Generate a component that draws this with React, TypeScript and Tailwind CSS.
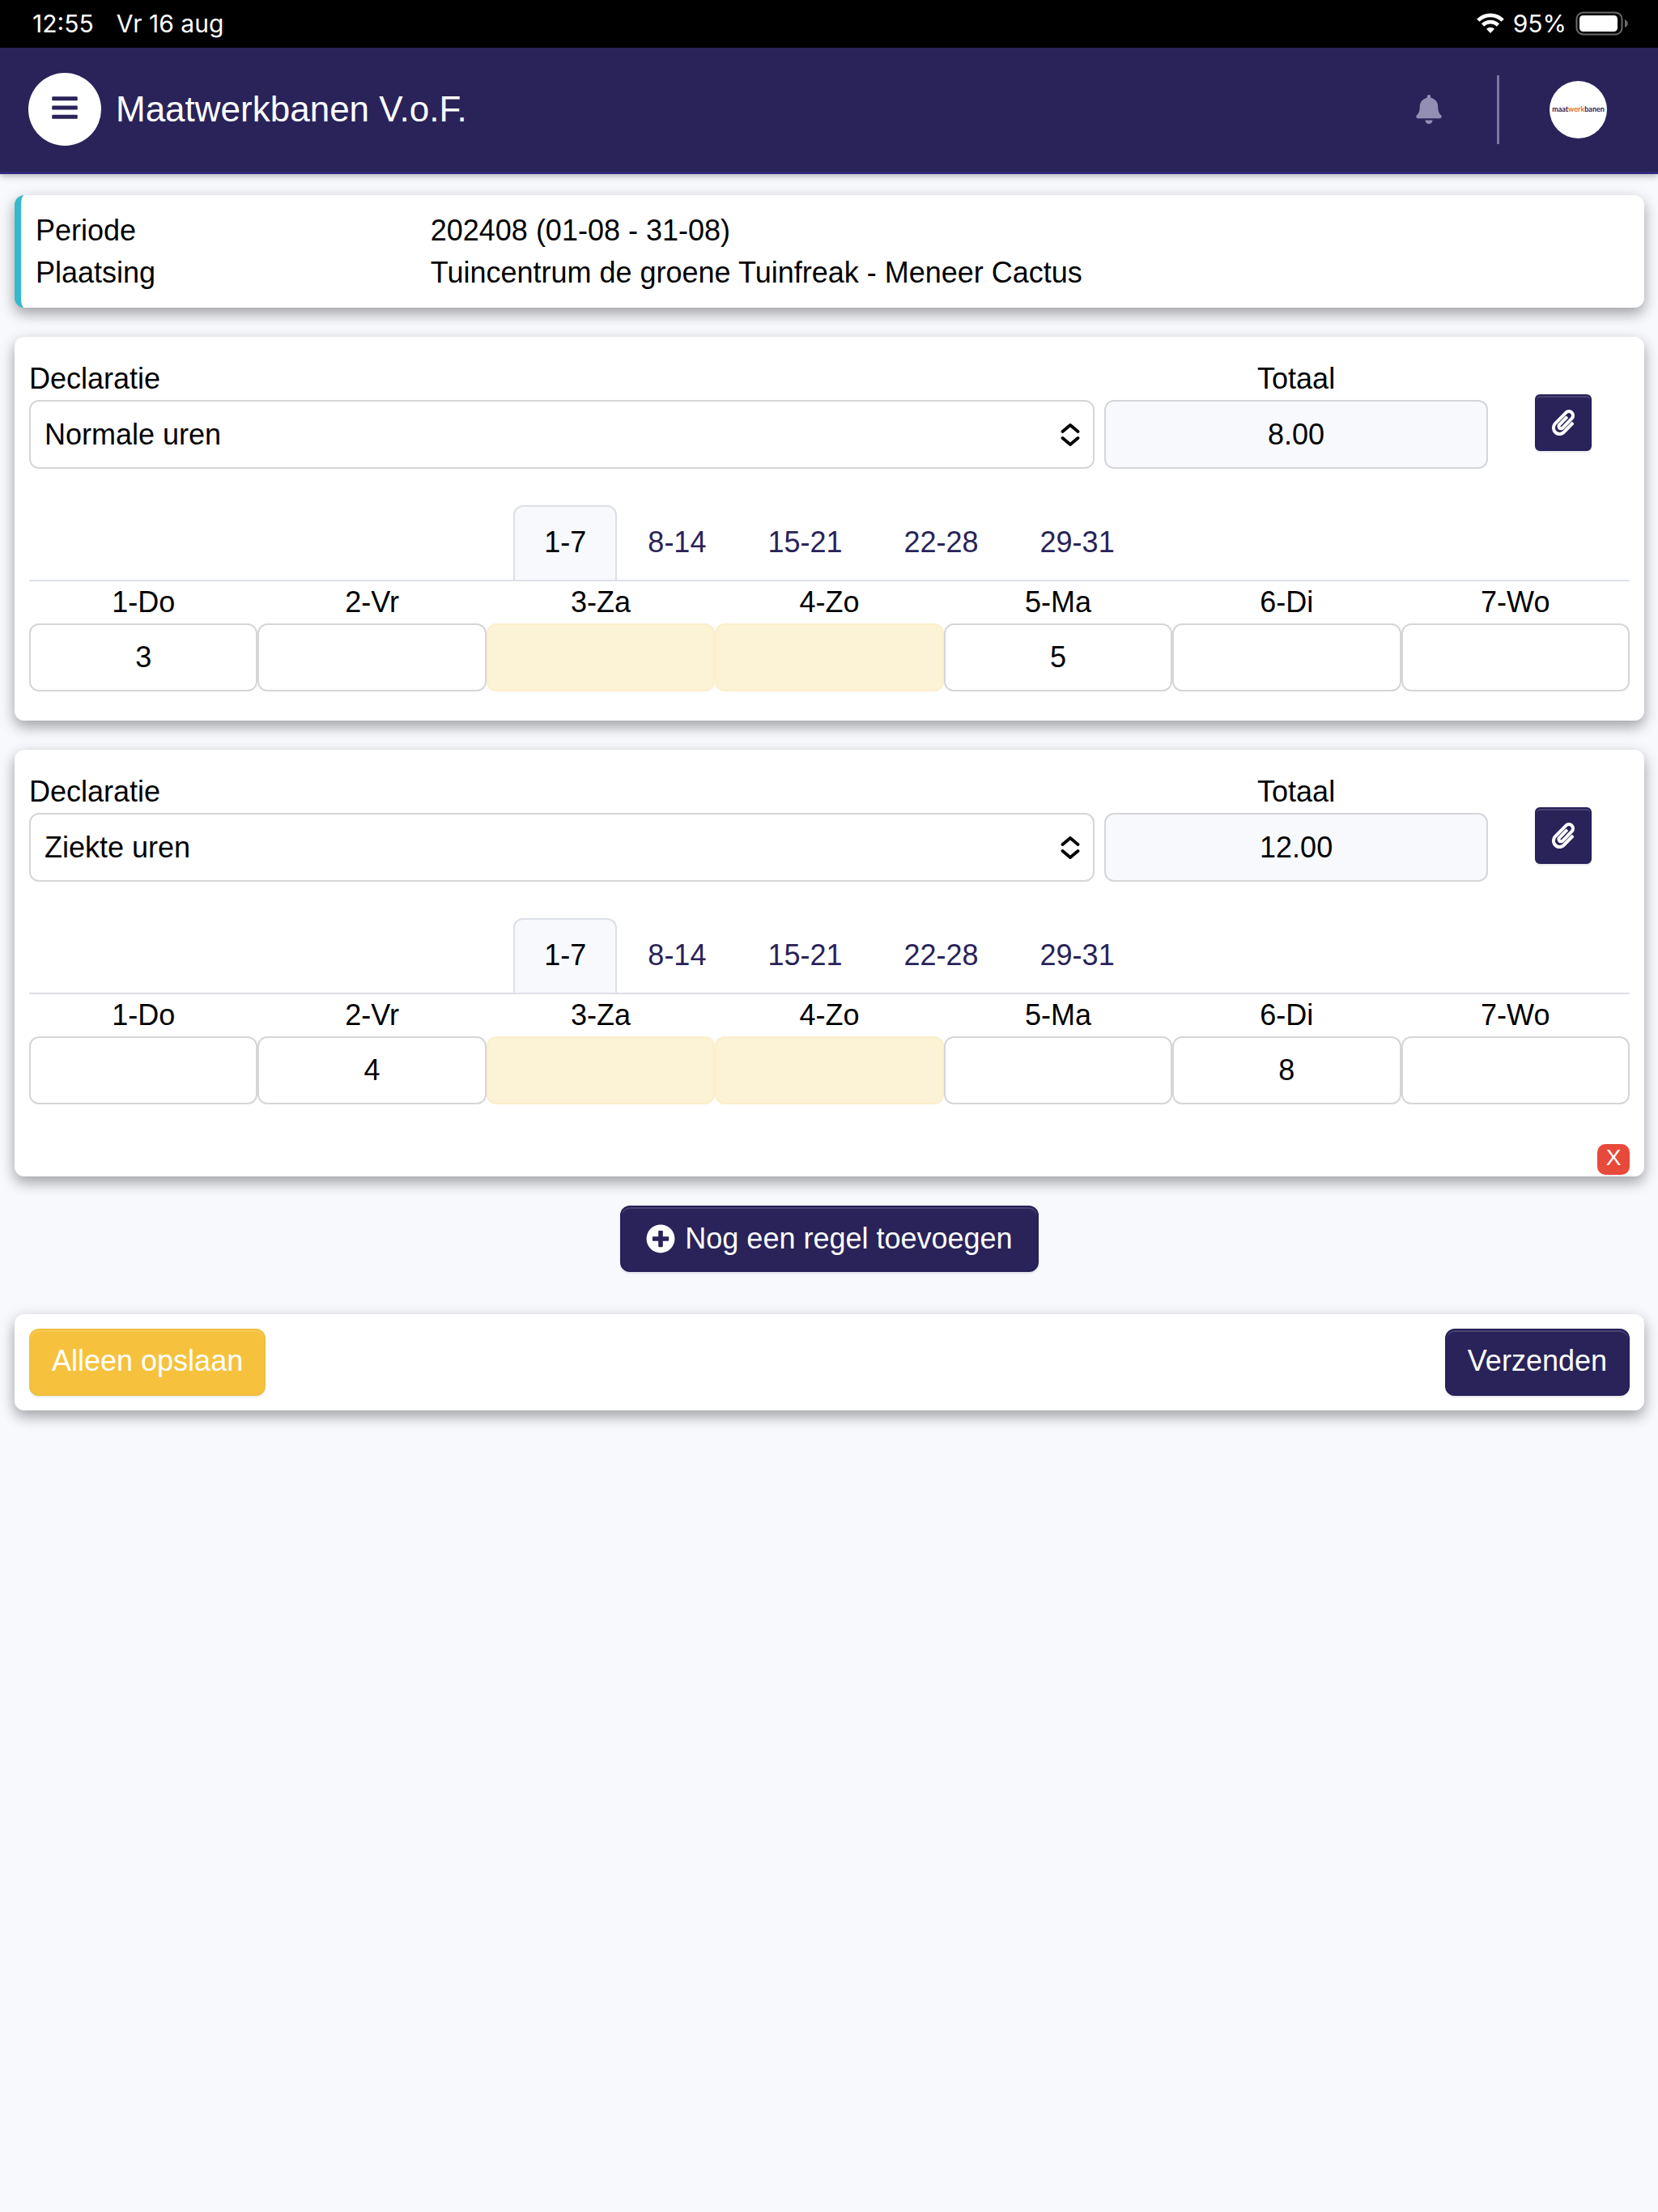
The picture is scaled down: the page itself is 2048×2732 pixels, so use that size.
import React, { useState } from 'react';
import { FaBars, FaBell, FaPaperclip, FaPlusCircle } from 'react-icons/fa';

type Day = { label: string; value: string; weekend?: boolean };

type Line = {
  id: string;
  type: string;
  total: string;
  days: Day[];
  removable?: boolean;
};

const WEEKS = ['1-7', '8-14', '15-21', '22-28', '29-31'];

const LINES: Line[] = [
  {
    id: 'line-1',
    type: 'Normale uren',
    total: '8.00',
    days: [
      { label: '1-Do', value: '3' },
      { label: '2-Vr', value: '' },
      { label: '3-Za', value: '', weekend: true },
      { label: '4-Zo', value: '', weekend: true },
      { label: '5-Ma', value: '5' },
      { label: '6-Di', value: '' },
      { label: '7-Wo', value: '' },
    ],
  },
  {
    id: 'line-2',
    type: 'Ziekte uren',
    total: '12.00',
    removable: true,
    days: [
      { label: '1-Do', value: '' },
      { label: '2-Vr', value: '4' },
      { label: '3-Za', value: '', weekend: true },
      { label: '4-Zo', value: '', weekend: true },
      { label: '5-Ma', value: '' },
      { label: '6-Di', value: '8' },
      { label: '7-Wo', value: '' },
    ],
  },
];

const card = 'rounded-xl bg-white shadow-[0_8px_16px_rgba(0,0,0,0.2),0_6px_20px_rgba(0,0,0,0.19)]';
const primary = 'border-2 border-[#26215a] bg-[#292359] text-white shadow-[inset_0_2px_0_rgba(255,255,255,0.15),0_2px_2px_rgba(41,35,89,0.1)]';

function StatusBar() {
  return <div className="flex h-[59px] items-center justify-between bg-black pb-[2px] pl-10 pr-9 font-['Inter',sans-serif] text-[30px] leading-9 text-white">
      <div className="flex gap-7">
        <span>12:55</span>
        <span>Vr 16 aug</span>
      </div>
      <div className="flex items-center gap-[11px]">
        <svg viewBox="0 0 34 25" className="h-[25px] w-[34px]" fill="none" stroke="currentColor" strokeWidth="4.6">
          <path d="M1.8 9.2a21.5 21.5 0 0 1 30.4 0" />
          <path d="M7.6 15a13.3 13.3 0 0 1 18.8 0" />
          <path d="M17 25l-5-5.2a7.2 7.2 0 0 1 10 0z" fill="currentColor" stroke="none" />
        </svg>
        <span>95%</span>
        <svg viewBox="0 0 66 30" className="h-[30px] w-[66px]">
          <rect x="1.5" y="1.5" width="56" height="27" rx="8" fill="none" stroke="#6b6b6b" strokeWidth="2" />
          <rect x="5" y="5" width="47" height="20" rx="4.5" fill="#fff" />
          <path d="M61 10c5 2 5 8 0 10z" fill="#6b6b6b" />
        </svg>
      </div>
    </div>;
}

function Header() {
  return <header className="flex items-center border-b-3 border-[#322a80] bg-[#292359] pb-8 pl-[35px] pr-[63px] pt-[31px] text-white shadow-[0_2px_8px_rgba(0,0,0,0.3)]">
      <button type="button" aria-label="Menu" className="flex size-[90px] items-center justify-center rounded-full bg-white pb-1 text-[#292359]">
        <FaBars className="size-9" />
      </button>
      <h1 className="ml-[18px] text-[44px] leading-[52px]">Maatwerkbanen V.o.F.</h1>
      <div className="ml-auto flex items-center">
        <button type="button" aria-label="Meldingen" className="text-[#938fb4]">
          <FaBell className="size-9" />
        </button>
        <div className="ml-[66px] mr-[62px] h-[85px] w-[3px] bg-[#7b78a0]" />
        <a href="#profiel" className="flex size-[71px] items-center justify-center rounded-full bg-white font-['Lato',sans-serif] text-[9px] font-bold leading-4 text-[#292359]">
          maat<span className="text-[#ec6a32]">werk</span>banen
        </a>
      </div>
    </header>;
}

function DeclarationCard({ line }: { line: Line }) {
  const [week, setWeek] = useState(WEEKS[0]);
  return <section className={`${card} px-[18px] pb-9 pt-[26px]`}>
      <div className="grid grid-cols-12">
        <div className="col-span-8 pr-[2px]">
          <label htmlFor={`${line.id}-type`} className="block">Declaratie</label>
          <div className="relative">
            <select id={`${line.id}-type`} defaultValue={line.type} className="block h-[85px] w-full appearance-none rounded-xl border-2 border-[#d5d6d8] bg-white px-[17px] text-black">
              <option>Normale uren</option>
              <option>Ziekte uren</option>
            </select>
            <svg viewBox="0 0 24 28" className="pointer-events-none absolute right-[18px] top-[29px] h-7 w-6" fill="none" stroke="#000" strokeWidth="3.8" strokeLinecap="round" strokeLinejoin="round">
              <path d="M2.5 10L12 2l9.5 8M2.5 18L12 26l9.5-8" />
            </svg>
          </div>
        </div>
        <div className="col-span-3 px-[10px]">
          <label htmlFor={`${line.id}-total`} className="block text-center">Totaal</label>
          <input id={`${line.id}-total`} readOnly value={line.total} className="block h-[85px] w-full rounded-xl border-2 border-[#d5d6d8] bg-[#f8f9fd] text-center" />
        </div>
        <div className="flex justify-center pt-[45px]">
          <button type="button" aria-label="Bijlage" className={`${primary} flex size-[70px] items-center justify-center rounded-md`}>
            <FaPaperclip className="size-8" />
          </button>
        </div>
      </div>

      <div role="tablist" className="mt-[45px] flex justify-center border-b-2 border-[#dddfe8]">
        {WEEKS.map(w => <button key={w} type="button" role="tab" aria-selected={w === week} onClick={() => setWeek(w)} className={`rounded-t-xl border-2 border-b-0 px-9 pb-5 pt-[18px] ${w === week ? 'border-[#dddfe8] bg-[#f8f9fd] text-black' : 'border-transparent text-[#292359]'}`}>
            {w}
          </button>)}
      </div>

      <div className="grid grid-cols-7">
        {line.days.map((day, i) => <div key={day.label}>
            <label htmlFor={`${line.id}-day-${i}`} className="block text-center">{day.label}</label>
            <input id={`${line.id}-day-${i}`} defaultValue={day.value} className={`block h-[84px] w-full rounded-xl border-2 text-center ${day.weekend ? 'border-[#fbeecb] bg-[#fcf2d6]' : 'border-[#d5d6d8] bg-white'}`} />
          </div>)}
      </div>

      {line.removable && <div className="-mb-[34px] mt-[49px] flex justify-end">
          <button type="button" aria-label="Regel verwijderen" className="h-[38px] w-10 rounded-[10px] bg-[#e74a3b] pb-1 text-[28px] leading-8 text-white">X</button>
        </div>}
    </section>;
}

export default function App() {
  return <div className="min-h-screen bg-[#f8f9fd] font-['Liberation_Sans',Arial,sans-serif] text-[36px] leading-[52px] text-black">
      <StatusBar />
      <Header />
      <main className="flex flex-col gap-9 pl-[18px] pr-[17px] pt-[26px]">
        <section className={`${card} border-l-8 border-[#36b9cc] pb-[17px] pl-[18px] pr-9 pt-[18px]`}>
          <dl className="grid grid-cols-4">
            <dt>Periode</dt>
            <dd className="col-span-3">202408 (01-08 - 31-08)</dd>
            <dt>Plaatsing</dt>
            <dd className="col-span-3">Tuincentrum de groene Tuinfreak - Meneer Cactus</dd>
          </dl>
        </section>

        {LINES.map(line => <DeclarationCard key={line.id} line={line} />)}

        <button type="button" className={`${primary} flex h-[82px] items-center gap-3 self-center rounded-xl px-[30px]`}>
          <FaPlusCircle className="size-9" />
          Nog een regel toevoegen
        </button>

        <section className={`${card} mt-4 flex justify-between p-[18px]`}>
          <button type="button" className="h-[83px] rounded-xl border-2 border-[#f0bf40] bg-[#f6c23e] px-[26px] pb-1 text-white shadow-[inset_0_2px_0_rgba(255,255,255,0.15),0_2px_2px_rgba(0,0,0,0.08)]">
            Alleen opslaan
          </button>
          <button type="button" className={`${primary} h-[83px] rounded-xl px-[26px] pb-1`}>Verzenden</button>
        </section>
      </main>
    </div>;
}
